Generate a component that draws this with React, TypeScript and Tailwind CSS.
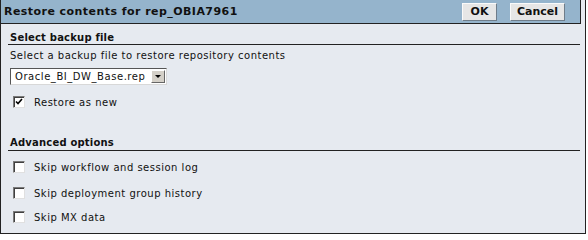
import React from "react";

const font = { fontFamily: '"DejaVu Sans", Verdana, sans-serif' };

function Check({
  checked,
  label,
  className = "",
}: {
  checked?: boolean;
  label: string;
  className?: string;
}) {
  return (
    <label className={`flex items-center h-[14px] text-[10px] text-[#111] ${className}`}>
      <span className="ml-[5px] w-[12px] h-[12px] border border-t-[#7a7a7a] border-l-[#7a7a7a] border-b-[#e0e0e0] border-r-[#e0e0e0] bg-white flex items-center justify-center shadow-[inset_1px_1px_0_#404040]">
        {checked && (
          <svg width="8" height="8" viewBox="0 0 8 8">
            <path d="M1 3.5 L3 5.5 L7 1" stroke="#000" strokeWidth="1.6" fill="none" />
          </svg>
        )}
      </span>
      <span className="ml-[9px] tracking-[0.5px]">{label}</span>
    </label>
  );
}

function Btn({ children, w }: { children: React.ReactNode; w: string }) {
  return (
    <button
      className={`${w} h-[18px] bg-[#e6e6e6] border border-t-[#fafafa] border-l-[#fafafa] border-b-[#6f7d8a] border-r-[#6f7d8a] text-[11px] font-bold text-[#111] leading-none`}
    >
      {children}
    </button>
  );
}

export default function App() {
  return (
    <div style={font} className="w-[586px] h-[234px] bg-[#e6eaf0] border border-[#222] border-t-0 flex flex-col overflow-hidden">
      <div className="w-[580px] h-[24px] shrink-0 bg-[#95b4cc] border-b border-r border-[#222] flex items-center pl-[3px] pr-[15px]">
        <span className="text-[11px] font-bold text-[#111] tracking-[0.45px] mt-[1px]">
          Restore contents for rep_OBIA7961
        </span>
        <div className="ml-auto flex gap-[13px]">
          <Btn w="w-[35px]">OK</Btn>
          <Btn w="w-[55px]">Cancel</Btn>
        </div>
      </div>

      <div className="w-[572px] ml-[7px] flex flex-col">
        <div className="mt-[7px] h-[13px] text-[10px] font-bold text-[#111] leading-[13px] pl-[2px] tracking-[0.2px]">
          Select backup file
        </div>
        <div className="border-t border-[#222]" />
        <div className="mt-[5px] text-[10px] text-[#111] leading-[12px] pl-[2px] tracking-[0.5px]">
          Select a backup file to restore repository contents
        </div>
        <div className="mt-[6px] ml-[2px] w-[157px] h-[17px] bg-white border border-t-[#555] border-l-[#555] border-b-[#d8d8d8] border-r-[#d8d8d8] flex items-center">
          <span className="pl-[4px] text-[10px] text-[#111] tracking-[0.55px] flex-1">
            Oracle_BI_DW_Base.rep
          </span>
          <span className="mr-[1px] w-[14px] h-[13px] bg-[#d4d0c8] border border-t-[#fff] border-l-[#fff] border-b-[#666] border-r-[#666] flex items-center justify-center">
            <svg width="6" height="4" viewBox="0 0 6 4">
              <path d="M0 0 H6 L3 3 Z" fill="#000" />
            </svg>
          </span>
        </div>
        <Check checked label="Restore as new" className="mt-[10px]" />
        <div className="mt-[27px] h-[13px] text-[10px] font-bold text-[#111] leading-[13px] pl-[2px] tracking-[0.2px]">
          Advanced options
        </div>
        <div className="mt-[1px] border-t border-[#222]" />
        <Check label="Skip workflow and session log" className="mt-[9px]" />
        <Check label="Skip deployment group history" className="mt-[12px]" />
        <Check label="Skip MX data" className="mt-[10px]" />
      </div>
    </div>
  );
}
